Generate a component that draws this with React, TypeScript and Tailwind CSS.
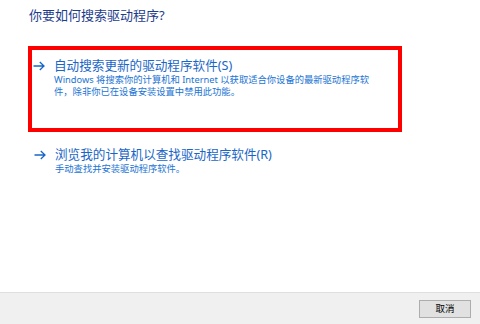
const font = { fontFamily: '"Noto Sans", "Noto Sans CJK SC", sans-serif' }

const Arrow = () => (
  <svg width="12" height="10" viewBox="0 0 12 10" className="shrink-0">
    <path d="M0.5 5 H11 M6.8 1 L11 5 L6.8 9" fill="none" stroke="#1a66c6" strokeWidth="1.3" />
  </svg>
)

interface OptionProps {
  title: string
  lines: string[]
}

const CommandLink = ({ title, lines }: OptionProps) => (
  <div>
    <div className="flex items-center h-[17px]">
      <div className="w-[21px] flex items-center">
        <Arrow />
      </div>
      <span className="text-[12.6px] leading-[17px] text-[#1a66c6] whitespace-nowrap">{title}</span>
    </div>
    <div className="pl-[21px] text-[9.3px] leading-[12px] text-[#2274d3]">
      {lines.map((l) => (
        <div key={l} className="whitespace-nowrap">
          {l}
        </div>
      ))}
    </div>
  </div>
)

export default function App() {
  return (
    <div className="w-[480px] h-[324px] flex flex-col bg-white overflow-hidden" style={font}>
      <div className="flex-1 pl-[28px] pt-[6px]">
        <h1 className="ml-[1px] text-[13px] leading-[18px] text-[#1e3c8c] font-normal">你要如何搜索驱动程序?</h1>

        <div className="mt-[22px] w-[374px] h-[86px] border-[4px] border-[#ff0000] pl-[1px] pt-[7px]">
          <CommandLink
            title="自动搜索更新的驱动程序软件(S)"
            lines={[
              "Windows 将搜索你的计算机和 Internet 以获取适合你设备的最新驱动程序软",
              "件，除非你已在设备安装设置中禁用此功能。",
            ]}
          />
        </div>

        <div className="mt-[14px] pl-[6px]">
          <CommandLink title="浏览我的计算机以查找驱动程序软件(R)" lines={["手动查找并安装驱动程序软件。"]} />
        </div>
      </div>

      <div className="h-[32px] border-t border-[#dfdfdf] bg-[#f0f0f0] flex items-center justify-end pr-[9px]">
        <button className="w-[52px] h-[18px] border border-[#adadad] bg-[#e1e1e1] text-[9.5px] leading-none text-black">
          取消
        </button>
      </div>
    </div>
  )
}
